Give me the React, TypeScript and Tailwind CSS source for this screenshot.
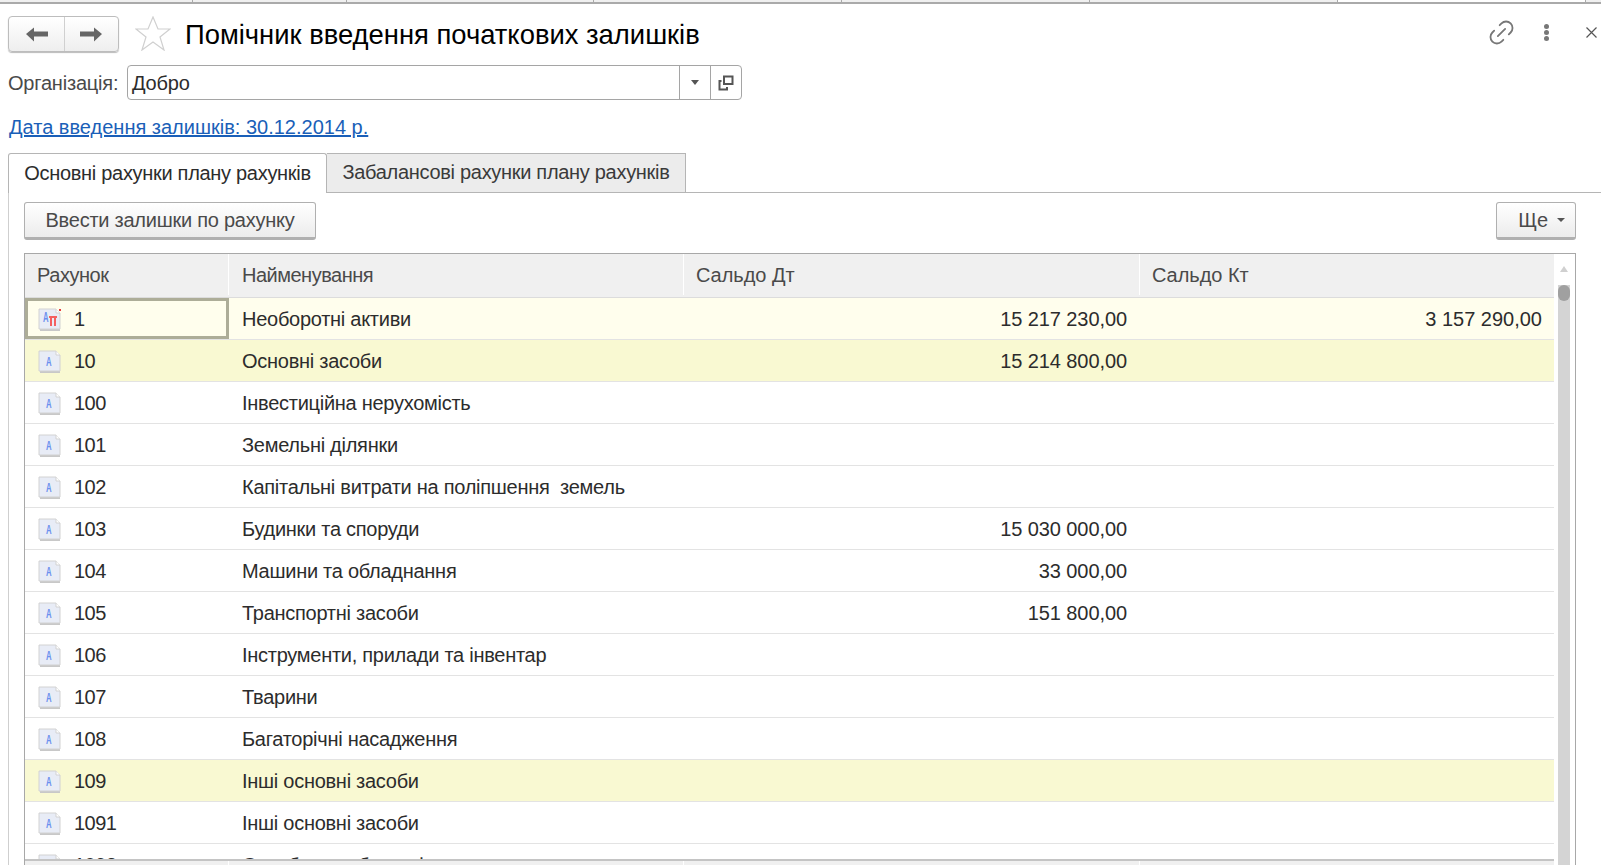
import { Link2 } from 'lucide-react';

const rows = [
    { code: '1', name: 'Необоротні активи', dt: '15 217 230,00', kt: '3 157 290,00', tone: 'current' },
    { code: '10', name: 'Основні засоби', dt: '15 214 800,00', kt: '', tone: 'group' },
    { code: '100', name: 'Інвестиційна нерухомість', dt: '', kt: '', tone: '' },
    { code: '101', name: 'Земельні ділянки', dt: '', kt: '', tone: '' },
    { code: '102', name: 'Капітальні витрати на поліпшення  земель', dt: '', kt: '', tone: '' },
    { code: '103', name: 'Будинки та споруди', dt: '15 030 000,00', kt: '', tone: '' },
    { code: '104', name: 'Машини та обладнання', dt: '33 000,00', kt: '', tone: '' },
    { code: '105', name: 'Транспортні засоби', dt: '151 800,00', kt: '', tone: '' },
    { code: '106', name: 'Інструменти, прилади та інвентар', dt: '', kt: '', tone: '' },
    { code: '107', name: 'Тварини', dt: '', kt: '', tone: '' },
    { code: '108', name: 'Багаторічні насадження', dt: '', kt: '', tone: '' },
    { code: '109', name: 'Інші основні засоби', dt: '', kt: '', tone: 'group' },
    { code: '1091', name: 'Інші основні засоби', dt: '', kt: '', tone: '' },
    { code: '1092', name: 'Оздоблення будинків', dt: '', kt: '', tone: '' },
];

function AccountIcon({ both }: { both?: boolean }) {
    return (
        <svg width="24" height="24" viewBox="0 0 24 24" className="mt-[3px] shrink-0">
            <path d="M2 3h16l4 4v16H2z" fill="#c8c8c8" />
            <path d="M1 1h17l4 4v16H1z" fill="#e8ecf6" stroke="#d2d2d2" strokeWidth="1" />
            <path d="M18 1v4h4" fill="#ffffff" stroke="#d2d2d2" strokeWidth="1" />
            {both ? (
                <>
                    <text x="0" y="0" transform="translate(5 14) scale(0.55 1)" fontSize="14" fontWeight="700" fontFamily="Liberation Sans" fill="#6a8fee">A</text>
                    <path d="M11 9h8M13 9v9M17 9v9" stroke="#f46060" strokeWidth="2" fill="none" />
                    <path d="M21 1h2v2h-2z" fill="#e83a3a" />
                </>
            ) : (
                <text x="0" y="0" transform="translate(8 16) scale(0.62 1)" fontSize="12.500" fontWeight="700" fontFamily="Liberation Sans" fill="#6a8fee">A</text>
            )}
        </svg>
    );
}

function Row({ code, name, dt, kt, tone }: { code: string; name: string; dt: string; kt: string; tone: string }) {
    const bg = tone === 'current' ? 'bg-[#fffeed]' : tone === 'group' ? 'bg-[#f9f9d2]' : 'bg-white';
    const first = tone === 'current' ? 'border-[3px] border-[#adad98] pl-[10px]' : 'pl-[13px]';
    return (
        <div className={`flex h-[42px] shrink-0 border-b border-[#e3e3e3] text-[#2c2c2c] ${bg}`}>
            <div className={`flex w-[204px] items-center gap-[12px] ${first}`}>
                <AccountIcon both={tone === 'current'} />
                <span className="tracking-[-0.5px]">{code}</span>
            </div>
            <div className="flex w-[455px] items-center whitespace-pre pl-[13px] tracking-[-0.27px]">{name}</div>
            <div className="flex w-[456px] items-center justify-end pr-[13px] tracking-[-0.08px]">{dt}</div>
            <div className="flex flex-1 items-center justify-end pr-[12px]">{kt}</div>
        </div>
    );
}

export default function App() {
    return (
        <div className="flex h-[865px] w-[1601px] flex-col overflow-hidden bg-white font-['Liberation_Sans',sans-serif] text-[20px] text-[#4a4a4a]">
            <div className="flex h-1 shrink-0 border-b-2 border-[#aaaaaa]">
                {[193, 154, 247, 248, 248, 248].map((w, i) => (
                    <div key={i} style={{ width: w }} className="border-r border-[#aaaaaa] bg-[#f0f0f0]" />
                ))}
                <div className="w-[248px] border-r border-[#aaaaaa]" />
                <div className="flex-1 bg-[#f0f0f0]" />
            </div>

            <div className="flex h-[48px] shrink-0 items-end pl-2">
                <div className="flex h-[36px] w-[111px] rounded-[4px] border border-[#bdbdbd] bg-gradient-to-b from-white to-[#eeeeee] shadow-[0_1px_1px_#bbb]">
                    <div className="flex w-[56px] items-center justify-center border-r border-[#d0d0d0]">
                        <svg width="24" height="16" viewBox="0 0 24 16"><path d="M1 8l8-6.500V5.500h14v5H9v5z" fill="#666" /></svg>
                    </div>
                    <div className="flex flex-1 items-center justify-center pr-[2px]">
                        <svg width="24" height="16" viewBox="0 0 24 16"><path d="M23 8l-8-6.500V5.500H1v5h14v5z" fill="#666" /></svg>
                    </div>
                </div>
                <svg width="36" height="35" viewBox="0 0 36 35" className="ml-[16px] mb-[1px]">
                    <path d="M18 1l5 12h12l-10 8 4 13-11-8-11 8 4-13L1 13h12z" fill="none" stroke="#d0d0d0" strokeWidth="1.200" />
                </svg>
                <div className="mb-[-1px] ml-[14px] text-[27.4px] leading-[36px] text-black">Помічник введення початкових залишків</div>
                <div className="ml-auto flex items-center pb-1">
                    <Link2 size={31} strokeWidth={1.4} className="-rotate-45 text-[#777777]" />
                    <div className="ml-[27px] flex flex-col gap-[1px]">
                        <span className="h-[5px] w-[5px] rounded-full bg-[#777777]" />
                        <span className="h-[5px] w-[5px] rounded-full bg-[#777777]" />
                        <span className="h-[5px] w-[5px] rounded-full bg-[#777777]" />
                    </div>
                    <svg width="11" height="11" viewBox="0 0 11 11" className="ml-[37px] mr-[4px]"><path d="M.5.5l10 10M10.500.5l-10 10" stroke="#555" strokeWidth="1.200" /></svg>
                </div>
            </div>

            <div className="mt-[13px] flex h-[35px] shrink-0 items-center pl-[8px]">
                <span className="w-[119px] tracking-[-0.2px]">Організація:</span>
                <div className="flex h-full w-[615px] rounded-[4px] border border-[#a5a5a5]">
                    <span className="flex flex-1 items-center pl-1 tracking-[-0.2px] text-[#2c2c2c]">Добро</span>
                    <div className="flex w-[31px] items-center justify-center border-l border-[#a5a5a5]">
                        <span className="h-0 w-0 border-x-[4px] border-t-[5px] border-x-transparent border-t-[#555555]" />
                    </div>
                    <div className="flex w-[31px] items-center justify-center border-l border-[#a5a5a5]">
                        <svg width="16" height="16" viewBox="0 0 16 16" fill="none" stroke="#555" strokeWidth="2">
                            <path d="M6 1.500h8.500V9H6z" />
                            <path d="M3.500 6H1.500v8.500H9V12" />
                        </svg>
                    </div>
                </div>
            </div>

            <div className="mt-[15px] h-[24px] shrink-0 pl-[9px] leading-[24px] text-[#1a5fb8] underline">Дата введення залишків: 30.12.2014 р.</div>

            <div className="mt-[14px] flex h-[40px] shrink-0 items-end">
                <div className="ml-2 flex h-[40px] w-[319px] items-center justify-center rounded-t-[3px] border border-b-0 border-[#b5b5b5] bg-white pb-[2px] tracking-[-0.3px] text-[#2c2c2c]">Основні рахунки плану рахунків</div>
                <div className="flex h-[40px] w-[359px] items-center justify-center border-y border-r border-[#b5b5b5] bg-[#ececec] pb-[2px] tracking-[-0.3px] text-[#3a3a3a]">Забалансові рахунки плану рахунків</div>
                <div className="flex-1 border-b border-[#b5b5b5]" />
            </div>

            <div className="ml-2 flex min-h-0 flex-1 flex-col border-l border-[#cfcfcf] pl-[15px] pr-[25px]">
                <div className="flex h-[60px] shrink-0 items-start justify-between pt-[9px]">
                    <div className="flex h-[38px] w-[292px] items-center justify-center rounded-[3px] border border-b-[3px] border-[#b0b0b0] bg-gradient-to-b from-white to-[#ececec] tracking-[-0.25px]">Ввести залишки по рахунку</div>
                    <div className="flex h-[38px] w-[80px] items-center justify-end gap-[9px] rounded-[3px] border border-b-[3px] border-[#b0b0b0] bg-gradient-to-b from-white to-[#ececec] pr-[10px]">
                        Ще
                        <span className="h-0 w-0 border-x-[4px] border-t-[4px] border-x-transparent border-t-[#555555]" />
                    </div>
                </div>

                <div className="flex min-h-0 flex-1 border-x border-t border-[#a8a8a8]">
                    <div className="relative flex min-w-0 flex-1 flex-col overflow-hidden">
                        <div className="flex h-[44px] shrink-0 border-b border-[#dcdcdc] bg-[#f0f0f0] pb-[2px]">
                            <div className="flex w-[204px] items-center border-r border-white pl-[12px] tracking-[-0.45px]">Рахунок</div>
                            <div className="flex w-[455px] items-center border-r border-white pl-[13px] tracking-[-0.5px]">Найменування</div>
                            <div className="flex w-[456px] items-center border-r border-white pl-[12px] tracking-[-0.05px]">Сальдо Дт</div>
                            <div className="flex flex-1 items-center pl-[12px] tracking-[-0.05px]">Сальдо Кт</div>
                        </div>
                        {rows.map((r) => <Row key={r.code} {...r} />)}
                        <div className="absolute bottom-0 left-0 right-0 flex h-[6px] border-t-2 border-[#c4c4c4] bg-[#f0f0f0]">
                            <div className="w-[204px] border-r border-white" />
                            <div className="w-[455px] border-r border-white" />
                            <div className="w-[456px] border-r border-white" />
                        </div>
                    </div>
                    <div className="flex w-[21px] shrink-0 flex-col items-center pl-[4px] pr-[5px]">
                        <span className="mt-[12px] h-0 w-0 border-x-[4px] border-b-[6px] border-x-transparent border-b-[#d0d0d0]" />
                        <div className="mt-[13px] flex w-[12px] flex-1 flex-col bg-[#d4d4d4]">
                            <div className="h-[16px] rounded-full bg-[#a0a0a0]" />
                        </div>
                    </div>
                </div>
            </div>
        </div>
    );
}
